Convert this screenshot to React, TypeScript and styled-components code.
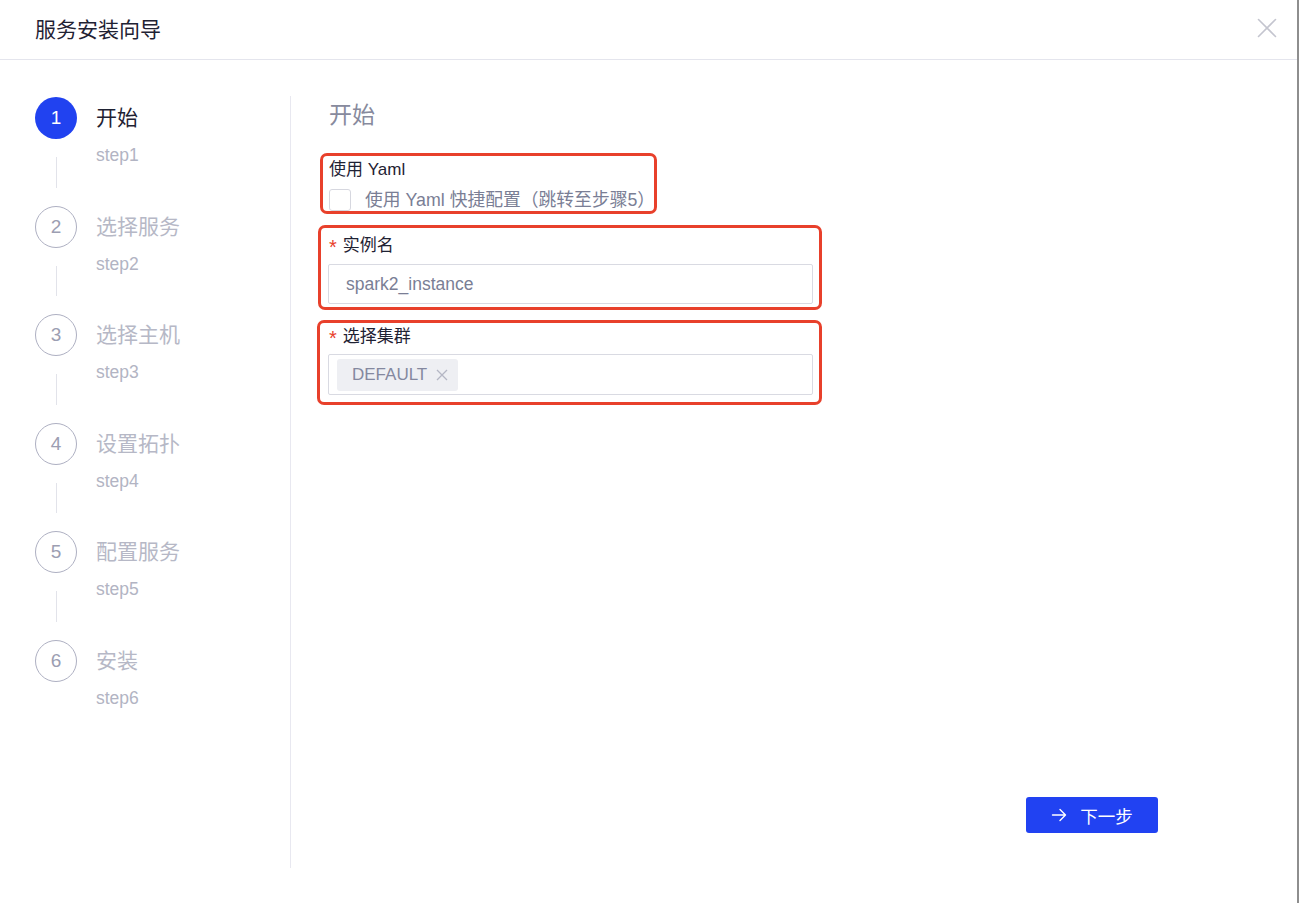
import React from 'react'
import styled, {createGlobalStyle} from 'styled-components'

const GlobalStyle = createGlobalStyle`
    html, body {
        margin: 0;
        padding: 0;
        background: #ffffff;
    }
    body {
        font-family: "Liberation Sans", "Noto Sans CJK SC", sans-serif;
        color: #1f2233;
    }
    *, *::before, *::after {
        box-sizing: border-box;
    }
`

const StyledModal = styled.div`
    width: 1299px;
    height: 903px;
    background: #ffffff;
    border-right: 2px solid #8e8e8e;
    display: flex;
    flex-direction: column;
`

const StyledHeader = styled.header`
    height: 60px;
    flex-shrink: 0;
    border-bottom: 1px solid #e4e5ed;
    display: flex;
    align-items: center;
    justify-content: space-between;
    padding-left: 35px;
    padding-right: 20px;
    padding-bottom: 3px;
`

const StyledTitle = styled.h1`
    margin: 0;
    font-size: 21px;
    font-weight: 400;
    color: #1f2233;
`

const StyledClose = styled.button`
    border: none;
    background: none;
    padding: 0;
    width: 20px;
    height: 20px;
    display: flex;
    align-items: center;
    justify-content: center;
    cursor: pointer;
`

const StyledBody = styled.div`
    display: flex;
    flex-direction: row;
    padding-top: 36px;
`

const StyledSteps = styled.aside`
    width: 291px;
    height: 772px;
    flex-shrink: 0;
    border-right: 1px solid #e8e8f0;
    padding-top: 1px;
    padding-left: 35px;
`

const StyledStep = styled.div`
    display: grid;
    grid-template-columns: 42px 1fr;
    column-gap: 19px;
`

const StyledCircle = styled.div<{$active?: boolean}>`
    width: 42px;
    height: 42px;
    border-radius: 50%;
    display: flex;
    align-items: center;
    justify-content: center;
    font-size: 19px;
    background: ${({$active}) => ($active ? '#2142f0' : '#ffffff')};
    color: ${({$active}) => ($active ? '#ffffff' : '#9c9eb2')};
    border: ${({$active}) => ($active ? 'none' : '1.5px solid #aeb0c2')};
`

const StyledStepTitle = styled.div<{$active?: boolean}>`
    display: flex;
    align-items: center;
    padding-bottom: 4px;
    font-size: 21px;
    color: ${({$active}) => ($active ? '#1f2233' : '#b6b8c6')};
`

const StyledTail = styled.div<{$last?: boolean}>`
    height: 66.6px;
    display: flex;
    justify-content: center;
    padding: 18px 0;

    &::after {
        content: '';
        width: 1px;
        background: ${({$last}) => ($last ? 'transparent' : '#e2e3ea')};
    }
`

const StyledStepDesc = styled.div`
    font-size: 17.5px;
    color: #b2b4c3;
    padding-top: 6px;
`

const StyledContent = styled.main`
    flex: 1;
    height: 772px;
    display: flex;
    flex-direction: column;
    padding-left: 38px;
    padding-top: 4px;
`

const StyledHeading = styled.h2`
    margin: 0;
    font-size: 23px;
    line-height: 30px;
    font-weight: 400;
    color: #878a9d;
`

const StyledForm = styled.div`
    display: flex;
    flex-direction: column;
    gap: 21px;
    margin-top: 28px;
    width: 484px;
`

const StyledMarked = styled.div<{$top: number; $left: number; $width: number; $height: number}>`
    position: relative;

    &::before {
        content: '';
        position: absolute;
        top: ${({$top}) => $top}px;
        left: ${({$left}) => $left}px;
        width: ${({$width}) => $width}px;
        height: ${({$height}) => $height}px;
        border: 3px solid #e8402b;
        border-radius: 7px;
        pointer-events: none;
        z-index: 2;
    }
`

const StyledLabel = styled.div`
    height: 22px;
    padding-top: 2px;
    font-size: 17px;
    line-height: 20px;
    color: #1f2233;
    display: flex;
    align-items: center;
    gap: 6px;
`

const StyledStar = styled.span`
    color: #e8402b;
    font-size: 20px;
    line-height: 1;
    padding-top: 2px;
`

const StyledCheckRow = styled.label`
    display: flex;
    align-items: center;
    gap: 14px;
    margin-top: 9px;
    margin-bottom: 2px;
    font-size: 17.8px;
    line-height: 22px;
    color: #7a7e95;
`

const StyledCheckbox = styled.span`
    width: 22px;
    height: 22px;
    border: 1px solid #d6d7df;
    border-radius: 3px;
    background: #ffffff;
`

const StyledInput = styled.input`
    display: block;
    width: 485px;
    height: 40px;
    margin-top: 8px;
    margin-left: -1px;
    border: 1px solid #d9dae2;
    border-radius: 2px;
    padding: 0 17px;
    font-family: inherit;
    font-size: 17.5px;
    color: #7a7e95;
    outline: none;
`

const StyledSelect = styled.div`
    width: 485px;
    height: 41px;
    margin-top: 7px;
    margin-left: -1px;
    border: 1px solid #d9dae2;
    border-radius: 2px;
    padding: 4px 8px;
    display: flex;
    align-items: center;
`

const StyledTag = styled.span`
    height: 32px;
    display: inline-flex;
    align-items: center;
    gap: 9px;
    padding: 0 10px 0 15px;
    background: #eeeff3;
    border-radius: 3px;
    font-size: 17px;
    color: #84889f;
`

const StyledFooter = styled.div`
    margin-top: auto;
    display: flex;
    justify-content: flex-end;
    padding-right: 139px;
    padding-bottom: 35px;
`

const StyledButton = styled.button`
    width: 132px;
    height: 36px;
    border: none;
    border-radius: 3px;
    background: #2142f2;
    color: #ffffff;
    font-family: inherit;
    font-size: 17.5px;
    display: flex;
    align-items: center;
    justify-content: center;
    gap: 13px;
    cursor: pointer;
`

const steps = [
    {title: '开始', desc: 'step1'},
    {title: '选择服务', desc: 'step2'},
    {title: '选择主机', desc: 'step3'},
    {title: '设置拓扑', desc: 'step4'},
    {title: '配置服务', desc: 'step5'},
    {title: '安装', desc: 'step6'},
]

const CloseIcon = () => (
    <svg width="20" height="20" viewBox="0 0 20 20">
        <path d="M1.5 1.5 L18.5 18.5 M18.5 1.5 L1.5 18.5" stroke="#c4c5cf" strokeWidth="1.6" strokeLinecap="round" />
    </svg>
)

const TagClose = () => (
    <svg width="12" height="12" viewBox="0 0 12 12">
        <path d="M1 1 L11 11 M11 1 L1 11" stroke="#b4b6c4" strokeWidth="1.3" />
    </svg>
)

const ArrowIcon = () => (
    <svg width="16" height="16" viewBox="0 0 16 16" fill="none">
        <path d="M1.5 8 H14.5 M9 2.5 L14.5 8 L9 13.5" stroke="#ffffff" strokeWidth="1.4" strokeLinecap="round" strokeLinejoin="round" />
    </svg>
)

export default function App() {
    return (
        <>
            <GlobalStyle />
            <StyledModal>
                <StyledHeader>
                    <StyledTitle>服务安装向导</StyledTitle>
                    <StyledClose aria-label="close"><CloseIcon /></StyledClose>
                </StyledHeader>
                <StyledBody>
                    <StyledSteps>
                        {steps.map((s, i) => (
                            <StyledStep key={s.desc}>
                                <StyledCircle $active={i === 0}>{i + 1}</StyledCircle>
                                <StyledStepTitle $active={i === 0}>{s.title}</StyledStepTitle>
                                <StyledTail $last={i === steps.length - 1} />
                                <StyledStepDesc>{s.desc}</StyledStepDesc>
                            </StyledStep>
                        ))}
                    </StyledSteps>
                    <StyledContent>
                        <StyledHeading>开始</StyledHeading>
                        <StyledForm>
                            <StyledMarked $top={-5} $left={-9} $width={337} $height={61}>
                                <StyledLabel>使用 Yaml</StyledLabel>
                                <StyledCheckRow>
                                    <StyledCheckbox />
                                    使用 Yaml 快捷配置（跳转至步骤5）
                                </StyledCheckRow>
                            </StyledMarked>
                            <StyledMarked $top={-9} $left={-11} $width={504} $height={85}>
                                <StyledLabel><StyledStar>*</StyledStar>实例名</StyledLabel>
                                <StyledInput defaultValue="spark2_instance" />
                            </StyledMarked>
                            <StyledMarked $top={-5} $left={-12} $width={505} $height={85}>
                                <StyledLabel><StyledStar>*</StyledStar>选择集群</StyledLabel>
                                <StyledSelect>
                                    <StyledTag>DEFAULT <TagClose /></StyledTag>
                                </StyledSelect>
                            </StyledMarked>
                        </StyledForm>
                        <StyledFooter>
                            <StyledButton><ArrowIcon />下一步</StyledButton>
                        </StyledFooter>
                    </StyledContent>
                </StyledBody>
            </StyledModal>
        </>
    )
}
